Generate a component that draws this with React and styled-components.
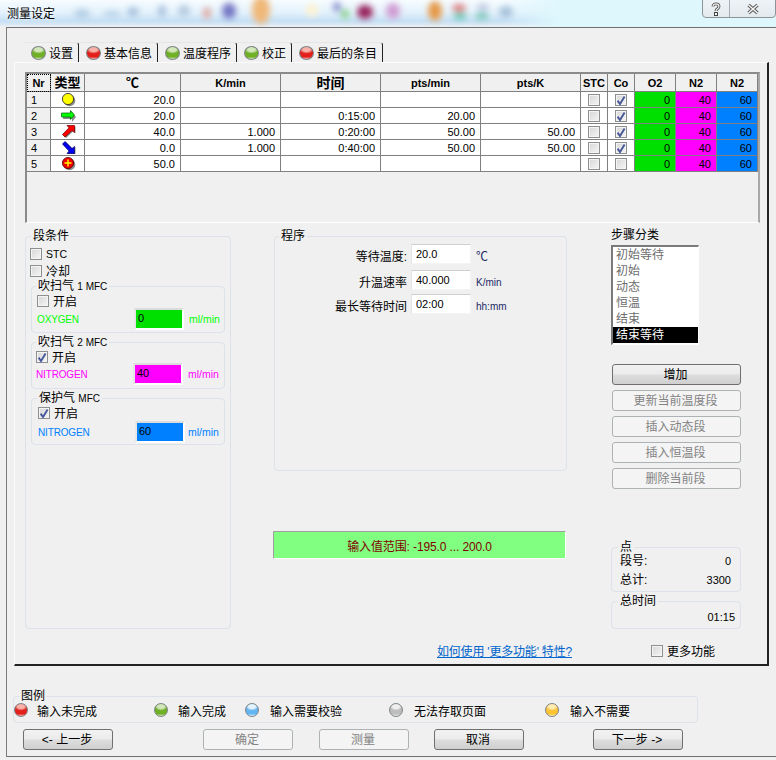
import React from "react";
import styled, { createGlobalStyle, css } from "styled-components";

const FONT = `"Liberation Sans", "Noto Sans CJK SC", sans-serif`;

const Global = createGlobalStyle`
  html, body { margin: 0; padding: 0; background: #f0f0f0; }
  body { font-family: ${FONT}; font-size: 12px; color: #000; }
  * { box-sizing: border-box; }
`;

const Page = styled.div`
  width: 776px;
  height: 760px;
  overflow: hidden;
  background: #f0f0f0;
`;

const TitleBar = styled.header`
  position: relative;
  height: 27px;
  display: flex;
  align-items: flex-start;
  padding: 6px 0 0 7px;
  overflow: hidden;
  background:
    linear-gradient(90deg, rgba(220,246,252,0) 0, rgba(220,246,252,0) 500px, rgba(222,247,253,1) 560px, rgba(222,247,253,1) 776px),
    linear-gradient(180deg, #f7fcff 0, #e4f2fc 45%, #c6e0f4 78%, #d8e7f3 90%, #eef1f4 100%);
`;

const TitleGlow = styled.svg`
  position: absolute;
  left: 0;
  top: 0;
`;

const TitleText = styled.h1`
  position: relative;
  margin: 0;
  font-size: 12px;
  line-height: 16px;
  font-weight: 400;
  color: #000;
  text-shadow: 0 0 4px #fff;
`;

const WinButtons = styled.div`
  position: absolute;
  right: 0;
  top: -1px;
  width: 74px;
  height: 19px;
  display: flex;
  border: 1px solid #8d9499;
  border-radius: 0 0 4px 4px;
  background: linear-gradient(180deg, #edf3f6, #e3eaee);
`;

const WinButton = styled.div`
  flex: ${(p) => (p.$wide ? "1" : "0 0 27px")};
  display: flex;
  align-items: center;
  justify-content: center;
  border-right: ${(p) => (p.$wide ? "0" : "1px solid #a6adb2")};
`;

const Window = styled.div`
  height: 730px;
  margin-left: 6px;
  border-left: 1px solid #7d7d7d;
  border-top: 1px solid #6e7072;
  border-bottom: 1px solid #6e7072;
  padding-top: 14px;
`;

const TabStrip = styled.nav`
  display: flex;
  height: 20px;
  margin-left: 18px;
`;

const Tab = styled.div`
  display: flex;
  align-items: center;
  gap: 3px;
  width: ${(p) => p.$w}px;
  padding-left: 6px;
  border-right: 1.5px solid #222;
  border-top: 1px solid #e6e6e6;
  border-radius: 0 3px 0 0;
  margin-right: 1px;
  font-size: 12px;
  white-space: nowrap;
`;

const dotColors = {
  green: ["#d2e8b8", "#6fb025", "#4c8a18"],
  red: ["#f8b0a8", "#e3201a", "#b01008"],
  blue: ["#e4f4ff", "#62b6f2", "#3a8fd2"],
  gray: ["#eeeeee", "#bdbdbd", "#979797"],
  amber: ["#ffedb0", "#fcc433", "#eca312"],
};

const Dot = styled.span`
  flex: none;
  display: block;
  width: ${(p) => p.$w || 15}px;
  height: 14px;
  border-radius: 50%;
  border: 1px solid #7f8588;
  ${(p) => {
    const c = dotColors[p.$c];
    return css`
      background: radial-gradient(ellipse 58% 36% at 50% 20%, ${c[0]} 0, ${c[0]} 50%, transparent 100%),
        linear-gradient(180deg, ${c[2]} 0, ${c[1]} 55%, ${c[1]} 82%, ${c[0]} 100%);
    `;
  }}
`;

const Panel = styled.main`
  width: 755px;
  height: 604px;
  margin-left: 7px;
  padding: 9px 0 0 10px;
  border-left: 1px solid #fbfbfb;
  border-top: 1px solid #fbfbfb;
  border-right: 2px solid #222;
  border-bottom: 2px solid #222;
`;

const GridBox = styled.section`
  width: 735px;
  height: 151px;
  background: #f0f0f0;
  border-left: 2px solid #8a8a8a;
  border-top: 2px solid #8a8a8a;
  border-right: 2px solid #a8a8a8;
  border-bottom: 1px solid #fff;
`;

const Grid = styled.table`
  table-layout: fixed;
  border-collapse: separate;
  border-spacing: 0;
  width: 731px;
`;

const Th = styled.th`
  height: 18px;
  padding: 0;
  background: #f0f0f0;
  border-right: 1px solid #808080;
  border-bottom: 1px solid #808080;
  font-size: ${(p) => p.$fs || 11}px;
  font-weight: 700;
  line-height: 14px;
  text-align: center;
  ${(p) => p.$focus && "outline: 1px dotted #000; outline-offset: -1px;"}
`;

const Td = styled.td`
  height: 16px;
  padding: 0 5px 0 ${(p) => (p.$left ? 4 : 0)}px;
  background: ${(p) => p.$bg || "#fff"};
  border-right: 1px solid #808080;
  border-bottom: 1px solid #808080;
  font-size: 11px;
  line-height: 14px;
  text-align: ${(p) => (p.$left ? "left" : "right")};
  overflow: hidden;
`;

const TdCenter = styled.td`
  height: 16px;
  padding: 0;
  background: ${(p) => p.$bg || "#fff"};
  border-right: 1px solid #808080;
  border-bottom: 1px solid #808080;
  & > * { margin: 0 auto; }
`;

const Box = styled.span`
  flex: none;
  display: block;
  width: 12px;
  height: 12px;
  border: 1px solid #8e8f8f;
  box-shadow: inset 0 0 0 1px #f4f4f4;
  background: linear-gradient(135deg, #d6d6d6, #f6f6f6);
  position: relative;
  & > svg { position: absolute; left: -1px; top: -1px; }
`;

const Check = ({ on }) => (
  <Box>
    {on && (
      <svg width="12" height="13" viewBox="0 0 12 13">
        <path d="M2.6 6.6 L5 10 L9.6 2.4" fill="none" stroke="#47599a" strokeWidth="1.9" />
      </svg>
    )}
  </Box>
);

const Content = styled.div`
  display: grid;
  grid-template-columns: 248px 338px 130px;
  margin-top: 5px;
  height: 401px;
`;

const Group = styled.fieldset`
  margin: ${(p) => p.$m || "0"};
  padding: ${(p) => p.$p || "0"};
  min-width: 0;
  width: ${(p) => (p.$w ? `${p.$w}px` : "auto")};
  height: ${(p) => p.$h}px;
  border: 1px solid #dce2e8;
  border-radius: 4px;
`;

const GroupTitle = styled.legend`
  margin-left: ${(p) => p.$ml || 6}px;
  padding: 0 2px;
  font-size: 12px;
  line-height: 16px;
  height: 16px;
`;

const SmallLatin = styled.span`
  font-size: 10px;
`;

const CheckRow = styled.label`
  display: flex;
  align-items: center;
  gap: ${(p) => p.$gap || 4}px;
  height: 13px;
  margin: ${(p) => p.$m || "0"};
  font-size: ${(p) => p.$fs || 12}px;
`;

const Mfc = styled.fieldset`
  margin: 1px 0 0 5px;
  padding: 0 0 0 ${(p) => p.$pl}px;
  height: 55px;
  width: 194px;
  min-width: 0;
  border: 1px solid #dce2e8;
  border-radius: 4px;
`;

const MfcTitle = styled.legend`
  margin-left: ${(p) => p.$ml}px;
  padding: 0 2px;
  height: 16px;
  font-size: 12px;
  line-height: 16px;
  white-space: nowrap;
`;

const FlowRow = styled.div`
  display: flex;
  align-items: center;
  height: 22px;
  margin-top: ${(p) => p.$mt}px;
  font-size: 10px;
  color: ${(p) => p.$c};
`;

const GasName = styled.span`
  width: ${(p) => p.$w}px;
  letter-spacing: -0.15px;
`;

const FlowBox = styled.div`
  width: 50px;
  height: 22px;
  padding: 0 0 0 2px;
  border: 2px solid #fff;
  border-top-color: #dcdcdc;
  border-left-color: #e6e6e6;
  background: ${(p) => p.$c};
  color: #000;
  font-size: 11px;
  line-height: 16px;
`;

const Unit = styled.span`
  margin-left: ${(p) => p.$ml ?? 5}px;
  font-size: 10.5px;
`;

const MidCol = styled.div`
  display: flex;
  flex-direction: column;
`;

const FormRows = styled.div`
  display: grid;
  grid-template-columns: 130px 60px auto;
  grid-template-rows: 26px 24px 20px;
  align-items: start;
  margin-left: 2px;
  column-gap: 4px;
`;

const FormLabel = styled.span`
  padding-top: 5px;
  text-align: right;
  font-size: 12px;
  line-height: 16px;
  white-space: nowrap;
`;

const FormInput = styled.div`
  height: 20px;
  padding: 0 0 0 4px;
  background: #fff;
  border: 1px solid #f4f4f4;
  border-top-color: #cfcfcf;
  border-left-color: #e4e4e4;
  font-size: 11px;
  line-height: 18px;
`;

const FormUnit = styled.span`
  margin-left: 1px;
  padding-top: 6px;
  font-size: ${(p) => p.$fs || 10}px;
  line-height: 14px;
  color: #1c2a66;
`;

const RangeBar = styled.div`
  width: 293px;
  height: 28px;
  margin-top: 60px;
  display: flex;
  align-items: center;
  justify-content: center;
  background: #80ff80;
  border-left: 1px solid #a0a0a0;
  border-top: 1px solid #a0a0a0;
  border-right: 1px solid #fff;
  border-bottom: 1px solid #fff;
  color: #800000;
  font-size: 12px;
  letter-spacing: -0.12px;
`;

const RightCol = styled.div`
  display: flex;
  flex-direction: column;
`;

const ListTitle = styled.div`
  height: 17px;
  font-size: 12px;
  line-height: 15px;
`;

const ListBox = styled.div`
  width: 88px;
  height: 100px;
  background: #fff;
  border-left: 2px solid #7a7a7a;
  border-top: 2px solid #7a7a7a;
  border-right: 1px solid #fff;
  border-bottom: 1px solid #fff;
`;

const ListItem = styled.div`
  height: 16px;
  padding-left: 3px;
  font-size: 12px;
  line-height: 16px;
  color: ${(p) => (p.$sel ? "#fff" : "#6d6d6d")};
  background: ${(p) => (p.$sel ? "#000" : "transparent")};
`;

const ButtonStack = styled.div`
  display: flex;
  flex-direction: column;
  gap: 5px;
  margin: 19px 0 50px 1px;
`;

const Btn = styled.button`
  width: ${(p) => p.$w || 129}px;
  height: 21px;
  margin-left: ${(p) => p.$ml || 0}px;
  padding: 0 2px 0 0;
  font-family: ${FONT};
  font-size: 12px;
  line-height: 14px;
  border-radius: 3px;
  color: #000;
  border: 1px solid #707070;
  background: linear-gradient(180deg, #f2f2f2 0, #ebebeb 48%, #dddddd 52%, #cfcfcf 100%);
  &:disabled {
    color: #838383;
    border-color: #adb2b5;
    background: #f4f4f4;
  }
`;

const PointRow = styled.div`
  display: flex;
  justify-content: space-between;
  height: 19px;
  margin-top: ${(p) => p.$mt || 0}px;
  padding: 0 9px 0 8px;
  font-size: 12px;
  line-height: 16px;
`;

const PointValue = styled.span`
  font-size: 11px;
`;

const TimeValue = styled.div`
  padding-right: 5px;
  text-align: right;
  font-size: 11px;
  line-height: 16px;
`;

const MoreRow = styled.div`
  display: flex;
  align-items: center;
  height: 15px;
  margin: 14px 0 0 412px;
`;

const HelpLink = styled.a`
  width: 214px;
  color: #0066cc;
  font-size: 12px;
  letter-spacing: -0.2px;
  text-decoration: underline;
  white-space: nowrap;
`;

const LegendGroup = styled.fieldset`
  width: 685px;
  height: 35px;
  margin: 22px 0 0 6px;
  padding: 0;
  border: 1px solid #dce2e8;
  border-radius: 4px;
`;

const LegendTitle = styled.legend`
  margin-left: 6px;
  padding: 0 1px;
  height: 16px;
  font-size: 12px;
  line-height: 16px;
`;

const LegendItems = styled.div`
  display: flex;
  margin: -1px 0 0 0;
`;

const LegendItem = styled.div`
  display: flex;
  align-items: flex-start;
  gap: ${(p) => p.$gap}px;
  width: ${(p) => p.$w}px;
  height: 16px;
  font-size: 12px;
  white-space: nowrap;
`;

const LegendLabel = styled.span`
  padding-top: 1px;
  line-height: 16px;
`;

const FootButtons = styled.div`
  display: flex;
  margin: 6px 0 0 16px;
`;

/* Segment type icons */
const TypeIcon = ({ kind }) => {
  const shadow = "#8a8a8a";
  const up = "14.5,1.5 14.5,8.5 12,6.500 5,13 2.500,10.500 9,3.800 7,1.500";
  const down = "14.5,13.5 14.5,6.500 12,8.500 5,1.500 2.500,4 9,11 7,13.500";
  return (
    <svg width="16" height="15" viewBox="0 0 16 15" style={{ display: "block", overflow: "visible" }}>
      {kind === "hold" && (
        <>
          <circle cx="9.500" cy="8.500" r="5.800" fill={shadow} />
          <circle cx="8" cy="7" r="5.600" fill="#ffff00" stroke="#222" strokeWidth="0.8" />
        </>
      )}
      {kind === "iso" && (
        <>
          <path d="M3 7h9V4l4 5-4 5v-3H3z" fill={shadow} />
          <path d="M1.500 5h9V2.500l4 4.500-4 4.500V9h-9z" fill="#00ff00" stroke="#006000" strokeWidth="0.7" />
        </>
      )}
      {kind === "up" && (
        <>
          <polygon points={up} fill={shadow} transform="translate(1 1)" />
          <polygon points={up} fill="#ff0000" stroke="#700000" strokeWidth="0.7" />
        </>
      )}
      {kind === "down" && (
        <>
          <polygon points={down} fill={shadow} transform="translate(1 0.500)" />
          <polygon points={down} fill="#0000ee" stroke="#000070" strokeWidth="0.7" />
        </>
      )}
      {kind === "end" && (
        <>
          <circle cx="9.500" cy="8.500" r="5.800" fill={shadow} />
          <circle cx="8" cy="7" r="5.600" fill="#ee0000" stroke="#500000" strokeWidth="0.8" />
          <path d="M4.500 7h7M8 3.500v7" stroke="#ffff00" strokeWidth="1.400" />
        </>
      )}
    </svg>
  );
};

const rows = [
  { n: 1, kind: "hold", t: "20.0", k: "", time: "", pm: "", pk: "", co: true },
  { n: 2, kind: "iso", t: "20.0", k: "", time: "0:15:00", pm: "20.00", pk: "", co: true },
  { n: 3, kind: "up", t: "40.0", k: "1.000", time: "0:20:00", pm: "50.00", pk: "50.00", co: true },
  { n: 4, kind: "down", t: "0.0", k: "1.000", time: "0:40:00", pm: "50.00", pk: "50.00", co: true },
  { n: 5, kind: "end", t: "50.0", k: "", time: "", pm: "", pk: "", co: false },
];

const colWidths = [24, 34, 96, 100, 100, 100, 100, 27, 27, 41, 41, 41];

const glows = [
  [82, 14, 8, 5, "#b6cfe6"], [112, 14, 9, 3, "#b6cfe6"], [133, 12, 6, 5, "#a9c4de"],
  [162, 11, 4, 6, "#a5bedb"], [184, 11, 6, 6, "#b5cbe0"], [207, 13, 4, 6, "#e0a8a0"],
  [229, 11, 7, 8, "#7577c4"], [261, 10, 9, 14, "#f0b878"], [312, 10, 6, 6, "#fff3cf"],
  [337, 7, 4, 5, "#8a90d0"], [345, 14, 4, 5, "#88d08a"], [365, 12, 8, 7, "#98205c"],
  [393, 11, 7, 8, "#d09cd4"], [435, 11, 7, 10, "#e69a48"], [459, 8, 7, 4, "#e08080"],
  [460, 16, 7, 4, "#70c8b8"], [483, 7, 6, 3, "#b8c0dc"], [482, 16, 7, 4, "#80c8bc"],
  [506, 12, 7, 6, "#a8c2dc"],
];

export default function App() {
  return (
    <Page>
      <Global />
      <TitleBar>
        <TitleGlow width="776" height="27" aria-hidden="true">
          <defs>
            <filter id="soft" x="-80%" y="-80%" width="260%" height="260%">
              <feGaussianBlur stdDeviation="3" />
            </filter>
          </defs>
          <g filter="url(#soft)">
            {glows.map(([x, y, rx, ry, c], i) => (
              <ellipse key={i} cx={x} cy={y} rx={rx} ry={ry} fill={c} />
            ))}
          </g>
        </TitleGlow>
        <TitleText>测量设定</TitleText>
        <WinButtons>
          <WinButton>
            <svg width="12" height="14" viewBox="0 0 12 14">
              <path d="M3 4.500C3 1 9 1 9 4.500 9 7 6 6.500 6 9" fill="none" stroke="#444" strokeWidth="2.800" />
              <path d="M3 4.500C3 1 9 1 9 4.500 9 7 6 6.500 6 9" fill="none" stroke="#f4f4f4" strokeWidth="1.200" />
              <rect x="4.500" y="10.500" width="3" height="3" fill="#f4f4f4" stroke="#444" />
            </svg>
          </WinButton>
          <WinButton $wide>
            <svg width="14" height="12" viewBox="0 0 14 12">
              <path d="M2.500 2 11.500 10M11.500 2 2.500 10" stroke="#555" strokeWidth="3.400" />
              <path d="M2.500 2 11.500 10M11.500 2 2.500 10" stroke="#f4f4f4" strokeWidth="1.600" />
            </svg>
          </WinButton>
        </WinButtons>
      </TitleBar>

      <Window>
        <TabStrip>
          <Tab $w={54}><Dot $c="green" />设置</Tab>
          <Tab $w={78}><Dot $c="red" />基本信息</Tab>
          <Tab $w={78}><Dot $c="green" />温度程序</Tab>
          <Tab $w={54}><Dot $c="green" />校正</Tab>
          <Tab $w={90}><Dot $c="red" />最后的条目</Tab>
        </TabStrip>

        <Panel>
          <GridBox>
            <Grid>
              <colgroup>
                {colWidths.map((w, i) => <col key={i} style={{ width: w }} />)}
              </colgroup>
              <thead>
                <tr>
                  <Th $focus>Nr</Th>
                  <Th $fs={13}>类型</Th>
                  <Th $fs={13}>℃</Th>
                  <Th>K/min</Th>
                  <Th $fs={14}>时间</Th>
                  <Th>pts/min</Th>
                  <Th>pts/K</Th>
                  <Th>STC</Th>
                  <Th>Co</Th>
                  <Th>O2</Th>
                  <Th>N2</Th>
                  <Th>N2</Th>
                </tr>
              </thead>
              <tbody>
                {rows.map((r) => (
                  <tr key={r.n}>
                    <Td $left $bg="#f0f0f0">{r.n}</Td>
                    <TdCenter><TypeIcon kind={r.kind} /></TdCenter>
                    <Td>{r.t}</Td>
                    <Td>{r.k}</Td>
                    <Td>{r.time}</Td>
                    <Td>{r.pm}</Td>
                    <Td>{r.pk}</Td>
                    <TdCenter><Check /></TdCenter>
                    <TdCenter><Check on={r.co} /></TdCenter>
                    <Td $bg="#00e000">0</Td>
                    <Td $bg="#ff00ff">40</Td>
                    <Td $bg="#0080ff">60</Td>
                  </tr>
                ))}
              </tbody>
            </Grid>
          </GridBox>

          <Content>
            <Group $h={401} $w={206} $p="3px 0 0 0">
              <GroupTitle $ml={5}>段条件</GroupTitle>
              <CheckRow $m="0 0 0 4px" $fs={10.500}><Check />STC</CheckRow>
              <CheckRow $m="4px 0 0 4px"><Check />冷却</CheckRow>
              <Mfc $pl={5}>
                <MfcTitle $ml={-1}>吹扫气 <SmallLatin>1 MFC</SmallLatin></MfcTitle>
                <CheckRow><Check />开启</CheckRow>
                <FlowRow $c="#00ff00" $mt={1}>
                  <GasName $w={97}>OXYGEN</GasName>
                  <FlowBox $c="#00e000">0</FlowBox>
                  <Unit>ml/min</Unit>
                </FlowRow>
              </Mfc>
              <Mfc $pl={4}>
                <MfcTitle $ml={0}>吹扫气 <SmallLatin>2 MFC</SmallLatin></MfcTitle>
                <CheckRow><Check on />开启</CheckRow>
                <FlowRow $c="#ff00ff" $mt={0}>
                  <GasName $w={97}>NITROGEN</GasName>
                  <FlowBox $c="#ff00ff">40</FlowBox>
                  <Unit>ml/min</Unit>
                </FlowRow>
              </Mfc>
              <Mfc $pl={6}>
                <MfcTitle $ml={-1}>保护气 <SmallLatin>MFC</SmallLatin></MfcTitle>
                <CheckRow><Check on />开启</CheckRow>
                <FlowRow $c="#0080ff" $mt={2}>
                  <GasName $w={97}>NITROGEN</GasName>
                  <FlowBox $c="#0080ff">60</FlowBox>
                  <Unit $ml={3}>ml/min</Unit>
                </FlowRow>
              </Mfc>
            </Group>

            <MidCol>
              <Group $h={243} $w={293} $m="0 0 0 1px">
                <GroupTitle $ml={4}>程序</GroupTitle>
                <FormRows>
                  <FormLabel>等待温度:</FormLabel>
                  <FormInput>20.0</FormInput>
                  <FormUnit $fs={12}>℃</FormUnit>
                  <FormLabel>升温速率</FormLabel>
                  <FormInput>40.000</FormInput>
                  <FormUnit>K/min</FormUnit>
                  <FormLabel>最长等待时间</FormLabel>
                  <FormInput>02:00</FormInput>
                  <FormUnit>hh:mm</FormUnit>
                </FormRows>
              </Group>
              <RangeBar>输入值范围: -195.0 ... 200.0</RangeBar>
            </MidCol>

            <RightCol>
              <ListTitle>步骤分类</ListTitle>
              <ListBox>
                <ListItem>初始等待</ListItem>
                <ListItem>初始</ListItem>
                <ListItem>动态</ListItem>
                <ListItem>恒温</ListItem>
                <ListItem>结束</ListItem>
                <ListItem $sel>结束等待</ListItem>
              </ListBox>
              <ButtonStack>
                <Btn>增加</Btn>
                <Btn disabled>更新当前温度段</Btn>
                <Btn disabled>插入动态段</Btn>
                <Btn disabled>插入恒温段</Btn>
                <Btn disabled>删除当前段</Btn>
              </ButtonStack>
              <Group $h={53}>
                <GroupTitle>点</GroupTitle>
                <PointRow $mt={-2}>段号:<PointValue>0</PointValue></PointRow>
                <PointRow>总计:<PointValue>3300</PointValue></PointRow>
              </Group>
              <Group $h={36} $m="1px 0 0 0">
                <GroupTitle>总时间</GroupTitle>
                <TimeValue>01:15</TimeValue>
              </Group>
            </RightCol>
          </Content>

          <MoreRow>
            <HelpLink>如何使用 '更多功能' 特性?</HelpLink>
            <CheckRow><Check />更多功能</CheckRow>
          </MoreRow>
        </Panel>

        <LegendGroup>
          <LegendTitle>图例</LegendTitle>
          <LegendItems>
            <LegendItem $w={140} $gap={9}><Dot $w={14} $c="red" /><LegendLabel>输入未完成</LegendLabel></LegendItem>
            <LegendItem $w={91} $gap={10}><Dot $w={14} $c="green" /><LegendLabel>输入完成</LegendLabel></LegendItem>
            <LegendItem $w={144} $gap={11}><Dot $w={14} $c="blue" /><LegendLabel>输入需要校验</LegendLabel></LegendItem>
            <LegendItem $w={156} $gap={11}><Dot $w={14} $c="gray" /><LegendLabel>无法存取页面</LegendLabel></LegendItem>
            <LegendItem $w={120} $gap={11}><Dot $w={14} $c="amber" /><LegendLabel>输入不需要</LegendLabel></LegendItem>
          </LegendItems>
        </LegendGroup>

        <FootButtons>
          <Btn $w={90}>&lt;- 上一步</Btn>
          <Btn $w={90} $ml={90} disabled>确定</Btn>
          <Btn $w={90} $ml={26} disabled>测量</Btn>
          <Btn $w={90} $ml={25}>取消</Btn>
          <Btn $w={90} $ml={69}>下一步 -&gt;</Btn>
        </FootButtons>
      </Window>
    </Page>
  );
}
